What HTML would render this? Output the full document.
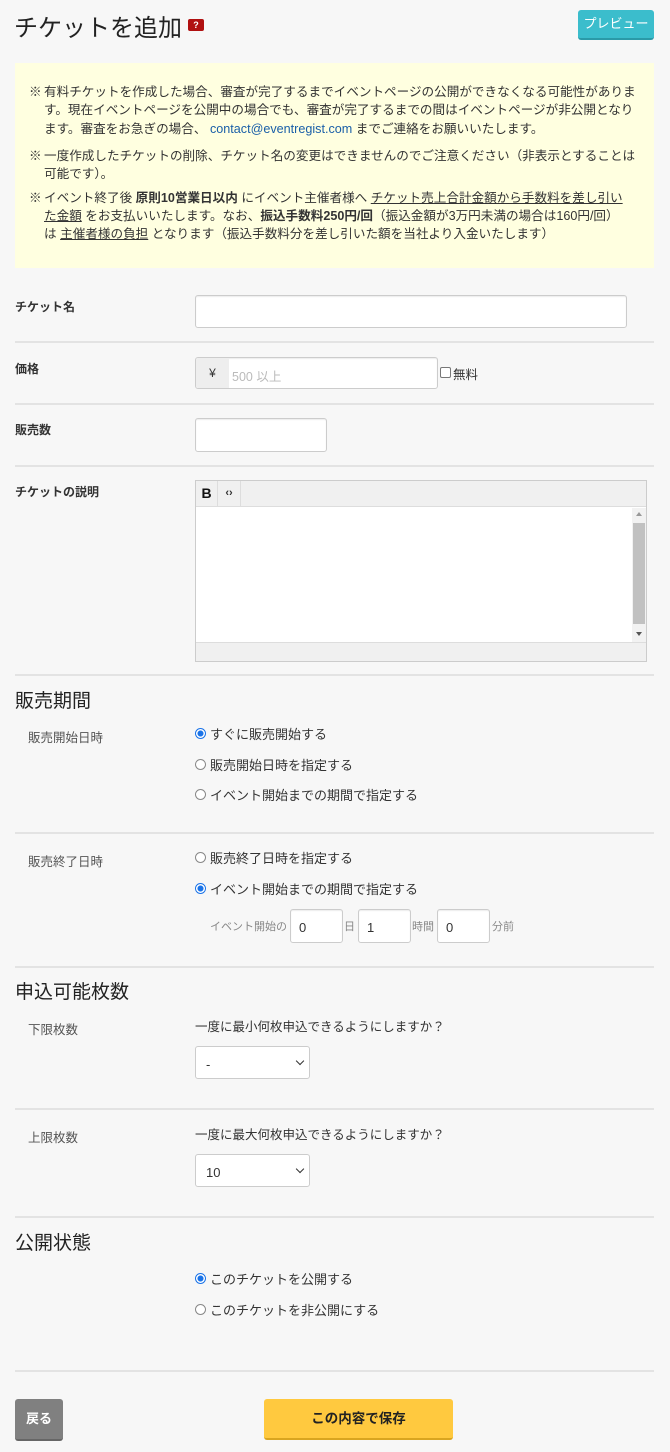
<!DOCTYPE html>
<html><head><meta charset="utf-8">
<style>
*{box-sizing:border-box;margin:0;padding:0}
body{width:670px;height:1452px;background:#f7f7f7;font-family:"Liberation Sans","Noto Sans CJK JP",sans-serif;color:#333;position:relative;overflow:hidden}
.a{position:absolute;white-space:nowrap}
.hr{position:absolute;left:15px;width:639px;height:2px;background:#e3e3e3}
.lbl{position:absolute;left:15px;font-size:12px;font-weight:bold;color:#333}
.sl{position:absolute;left:28px;font-size:12.5px;color:#555}
.inp{position:absolute;background:#fff;border:1px solid #ccc;border-radius:3px;box-shadow:inset 0 1px 1px rgba(0,0,0,.08)}
.h2{position:absolute;left:15px;font-size:19px;color:#222}
.rd{position:absolute;left:195px;font-size:13px;color:#333;display:flex;align-items:center}
.rd i{display:inline-block;width:11px;height:11px;border:1px solid #888;border-radius:50%;background:#fff;margin-right:4px}
.rd i.on{border:1px solid #1a73e8;background:radial-gradient(circle,#1a73e8 0 2.8px,#fff 3.2px)}
.yb{position:absolute;left:15px;top:63px;width:639px;height:205px;background:#ffffe0}
.yl{position:absolute;font-size:12.6px;color:#333;white-space:nowrap}
u{text-decoration:underline}
.sel{position:absolute;left:195px;width:115px;height:33px;background:#fff;border:1px solid #ccc;border-radius:3px;font-size:13px;padding:10px 0 0 10px}
.sel:after{content:"";position:absolute;right:6px;top:11px;width:5px;height:5px;border-right:1.5px solid #333;border-bottom:1.5px solid #333;transform:rotate(45deg)}
.gt{position:absolute;font-size:11px;color:#888}
</style></head><body>
<div class="a" style="left:14px;top:8px;font-size:24px;color:#222">チケットを追加</div>
<div class="a" style="left:188px;top:19px;width:16px;height:12px;background:#b01010;border-radius:2px;color:#fff;font-size:9px;font-weight:bold;text-align:center;line-height:12px">?</div>
<div class="a" style="left:185px;top:23px;width:0;height:0;border:3px solid transparent;border-right-color:#b01010"></div>
<div class="a" style="left:578px;top:10px;width:76px;height:30px;background:#3bbdcc;border-radius:3px;border-bottom:2px solid #2a9aa8;color:#fff;font-size:13px;text-align:center;line-height:27px">プレビュー</div>

<div class="yb"></div>
<div class="yl" style="left:29px;top:81px">※</div>
<div class="yl" style="left:44px;top:81px">有料チケットを作成した場合、審査が完了するまでイベントページの公開ができなくなる可能性がありま</div>
<div class="yl" style="left:44px;top:99px">す。現在イベントページを公開中の場合でも、審査が完了するまでの間はイベントページが非公開となり</div>
<div class="yl" style="left:44px;top:118px">ます。審査をお急ぎの場合、 <span style="color:#1a5fa8">contact@eventregist.com</span> までご連絡をお願いいたします。</div>
<div class="yl" style="left:29px;top:145px">※</div>
<div class="yl" style="left:44px;top:145px">一度作成したチケットの削除、チケット名の変更はできませんのでご注意ください（非表示とすることは</div>
<div class="yl" style="left:44px;top:163px">可能です）。</div>
<div class="yl" style="left:29px;top:187px">※</div>
<div class="yl" style="left:44px;top:187px">イベント終了後 <b>原則10営業日以内</b> にイベント主催者様へ <u>チケット売上合計金額から手数料を差し引い</u></div>
<div class="yl" style="left:44px;top:205px"><u>た金額</u> をお支払いいたします。なお、<b>振込手数料250円/回</b>（振込金額が3万円未満の場合は160円/回）</div>
<div class="yl" style="left:44px;top:223px">は <u>主催者様の負担</u> となります（振込手数料分を差し引いた額を当社より入金いたします）</div>

<div class="lbl" style="top:298px">チケット名</div>
<div class="inp" style="left:195px;top:295px;width:432px;height:33px"></div>
<div class="hr" style="top:341px"></div>
<div class="lbl" style="top:360px">価格</div>
<div class="inp" style="left:195px;top:357px;width:243px;height:32px;overflow:hidden"><div style="position:absolute;left:0;top:0;width:33px;height:32px;background:#eee;font-size:12px;text-align:center;line-height:30px">¥</div><div style="position:absolute;left:36px;top:8px;font-size:12.5px;color:#bbb">500 以上</div></div>
<div class="a" style="left:440px;top:367px;width:11px;height:11px;border:1px solid #777;border-radius:2px;background:#fff"></div>
<div class="a" style="left:453px;top:364px;font-size:12.5px">無料</div>
<div class="hr" style="top:403px"></div>
<div class="lbl" style="top:421px">販売数</div>
<div class="inp" style="left:195px;top:418px;width:132px;height:34px"></div>
<div class="hr" style="top:465px"></div>
<div class="lbl" style="top:483px">チケットの説明</div>
<div class="a" style="left:195px;top:480px;width:452px;height:182px;border:1px solid #ccc;background:#fff">
 <div style="position:absolute;left:0;top:0;width:450px;height:26px;background:#f0f0f0;border-bottom:1px solid #ddd"></div>
 <div style="position:absolute;left:0;top:0;width:22px;height:26px;border-right:1px solid #ddd;font-weight:bold;font-size:14px;text-align:center;line-height:25px;color:#111">B</div>
 <div style="position:absolute;left:22px;top:0;width:23px;height:26px;border-right:1px solid #ddd;font-size:11px;font-weight:bold;text-align:center;line-height:24px">‹›</div>
 <div style="position:absolute;left:436px;top:27px;width:14px;height:134px;background:#f2f2f2"></div>
 <div style="position:absolute;left:437px;top:42px;width:12px;height:101px;background:#c1c1c1"></div>
 <div style="position:absolute;left:440px;top:31px;border:3px solid transparent;border-bottom:4px solid #999;border-top:0"></div>
 <div style="position:absolute;left:440px;top:151px;border:3px solid transparent;border-top:4px solid #555;border-bottom:0"></div>
 <div style="position:absolute;left:0;top:161px;width:450px;height:19px;background:#f0f0f0;border-top:1px solid #ddd"></div>
</div>
<div class="hr" style="top:674px"></div>

<div class="h2" style="top:686px">販売期間</div>
<div class="sl" style="top:727px">販売開始日時</div>
<div class="rd" style="top:724px"><i class="on"></i>すぐに販売開始する</div>
<div class="rd" style="top:755px"><i></i>販売開始日時を指定する</div>
<div class="rd" style="top:785px"><i></i>イベント開始までの期間で指定する</div>
<div class="hr" style="top:832px"></div>
<div class="sl" style="top:851px">販売終了日時</div>
<div class="rd" style="top:848px"><i></i>販売終了日時を指定する</div>
<div class="rd" style="top:879px"><i class="on"></i>イベント開始までの期間で指定する</div>
<div class="gt" style="left:210px;top:918px">イベント開始の</div>
<div class="inp" style="left:290px;top:909px;width:53px;height:34px;font-size:13px;padding:10px 0 0 8px">0</div>
<div class="gt" style="left:344px;top:918px">日</div>
<div class="inp" style="left:358px;top:909px;width:53px;height:34px;font-size:13px;padding:10px 0 0 8px">1</div>
<div class="gt" style="left:412px;top:918px">時間</div>
<div class="inp" style="left:437px;top:909px;width:53px;height:34px;font-size:13px;padding:10px 0 0 8px">0</div>
<div class="gt" style="left:492px;top:918px">分前</div>
<div class="hr" style="top:966px"></div>

<div class="h2" style="top:977px">申込可能枚数</div>
<div class="sl" style="top:1019px">下限枚数</div>
<div class="a" style="left:195px;top:1016px;font-size:12.5px">一度に最小何枚申込できるようにしますか？</div>
<div class="sel" style="top:1046px">-</div>
<div class="hr" style="top:1108px"></div>
<div class="sl" style="top:1127px">上限枚数</div>
<div class="a" style="left:195px;top:1124px;font-size:12.5px">一度に最大何枚申込できるようにしますか？</div>
<div class="sel" style="top:1154px">10</div>
<div class="hr" style="top:1216px"></div>

<div class="h2" style="top:1228px">公開状態</div>
<div class="rd" style="top:1269px"><i class="on"></i>このチケットを公開する</div>
<div class="rd" style="top:1300px"><i></i>このチケットを非公開にする</div>
<div class="hr" style="top:1370px"></div>

<div class="a" style="left:15px;top:1399px;width:48px;height:42px;background:#808080;border-radius:3px;border-bottom:2px solid #666;color:#fff;font-size:13px;font-weight:bold;text-align:center;line-height:40px">戻る</div>
<div class="a" style="left:264px;top:1399px;width:189px;height:41px;background:#ffc93f;border-radius:3px;border-bottom:2px solid #d9a520;color:#222;font-size:13.5px;font-weight:bold;text-align:center;line-height:39px">この内容で保存</div>
</body></html>
